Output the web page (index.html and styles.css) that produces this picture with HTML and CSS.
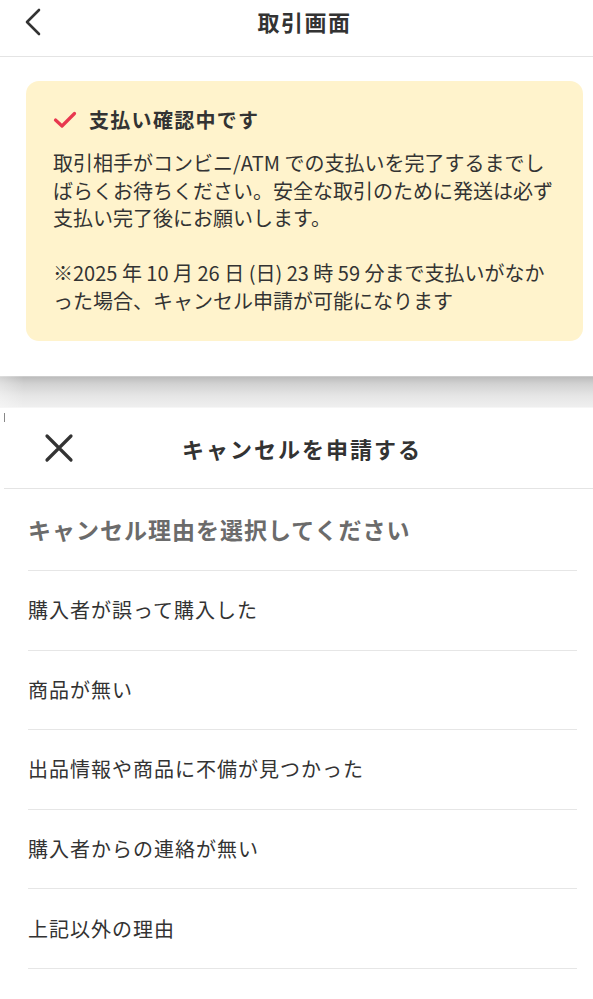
FILE: index.html
```html
<!DOCTYPE html>
<html lang="ja">
<head>
<meta charset="utf-8">
<title>取引画面</title>
<link rel="stylesheet" href="styles.css">
</head>
<body>
<header class="topbar">
  <button class="icon-btn back" aria-label="戻る">
    <svg width="18" height="28" viewBox="0 0 18 28"><path d="M15 2 L3 14 L15 26" fill="none" stroke="#333" stroke-width="2.6" stroke-linecap="round" stroke-linejoin="round"/></svg>
  </button>
  <h1 class="topbar-title">取引画面</h1>
  <span class="spacer"></span>
</header>

<main class="trade">
  <section class="status-card">
    <div class="status-head">
      <svg class="check" width="24" height="18" viewBox="0 0 24 18"><path d="M2.5 9 L9 15 L21.5 2.5" fill="none" stroke="#e8384f" stroke-width="3.2" stroke-linecap="round" stroke-linejoin="round"/></svg>
      <h2 class="status-title">支払い確認中です</h2>
    </div>
    <p class="status-text">取引相手がコンビニ/ATM での支払いを完了するまでしばらくお待ちください。安全な取引のために発送は必ず支払い完了後にお願いします。</p>
    <p class="status-text note">※2025 年 10 月 26 日 (日) 23 時 59 分まで支払いがなかった場合、キャンセル申請が可能になります</p>
  </section>
</main>

<div class="backdrop-edge"></div>

<section class="sheet">
  <span class="sheet-grip"></span>
  <div class="sheet-head">
    <button class="icon-btn close" aria-label="閉じる">
      <svg width="30" height="30" viewBox="0 0 30 30"><path d="M3 3 L27 27 M27 3 L3 27" fill="none" stroke="#333" stroke-width="3.2" stroke-linecap="round"/></svg>
    </button>
    <h2 class="sheet-title">キャンセルを申請する</h2>
    <span class="spacer"></span>
  </div>
  <ul class="reason-list">
    <li class="reason prompt">キャンセル理由を選択してください</li>
    <li class="reason">購入者が誤って購入した</li>
    <li class="reason">商品が無い</li>
    <li class="reason">出品情報や商品に不備が見つかった</li>
    <li class="reason">購入者からの連絡が無い</li>
    <li class="reason">上記以外の理由</li>
  </ul>
</section>
</body>
</html>
```

FILE: styles.css
```css
* { box-sizing: border-box; }

html, body {
  margin: 0;
  padding: 0;
  background: #ffffff;
}

body {
  font-family: "Noto Sans CJK JP", "Noto Sans", sans-serif;
  color: #333333;
  width: 593px;
}

h1, h2, p, ul { margin: 0; padding: 0; }

.icon-btn {
  border: 0;
  background: none;
  padding: 0;
  display: flex;
  align-items: center;
  justify-content: flex-start;
}

/* top bar */
.topbar {
  height: 57px;
  display: grid;
  grid-template-columns: 64px 1fr 48px;
  align-items: center;
  border-bottom: 1px solid #e4e4e4;
}

.topbar .back {
  padding-left: 24px;
  margin-top: -12px;
}

.topbar-title {
  font-size: 22px;
  font-weight: 700;
  letter-spacing: 1.5px;
  text-align: center;
  margin-top: -14px;
  color: #333;
}

/* status card */
.trade {
  padding: 24px 10px 35px 26px;
}

.status-card {
  background: #fff3cc;
  border-radius: 13px;
  padding: 24px 24px 27px 27px;
}

.status-head {
  display: flex;
  align-items: center;
  gap: 12px;
  margin-bottom: 14px;
}

.check { flex: none; }

.status-title {
  font-size: 20px;
  font-weight: 700;
  letter-spacing: 1.3px;
  line-height: 30px;
}

.status-text {
  font-size: 20px;
  line-height: 27.5px;
  color: #333;
}

.status-text.note {
  margin-top: 27.5px;
}

/* dimmed strip */
.backdrop-edge {
  height: 32px;
  background:
    linear-gradient(to right, rgba(255,255,255,0.35), rgba(255,255,255,0) 24px),
    linear-gradient(to bottom, #dcdcdc 0, #bcbcbc 1px, #d2d2d2 8px, #e6e6e6 20px, #efefef 100%);
  border-bottom: 1px solid #f6f6f6;
}

/* sheet */
.sheet {
  position: relative;
  background: #fff;
  margin-left: 4px;
}

.sheet-grip {
  position: absolute;
  left: 0;
  top: 5px;
  width: 1px;
  height: 9px;
  background: #888;
}

.sheet-head {
  height: 81px;
  display: grid;
  grid-template-columns: 96px 1fr 89px;
  align-items: center;
  border-bottom: 1px solid #e4e4e4;
}

.sheet-head .close {
  padding-left: 40px;
}

.sheet-title {
  font-size: 22px;
  font-weight: 700;
  letter-spacing: 2px;
  text-align: center;
  color: #333;
}

.reason-list {
  list-style: none;
  margin: 0 16px 0 24px;
}

.reason {
  height: 79.6px;
  display: flex;
  align-items: center;
  font-size: 20px;
  letter-spacing: 1px;
  color: #333;
  border-bottom: 1px solid #e6e6e6;
  padding-bottom: 1px;
}

.reason.prompt {
  height: 82px;
  font-size: 23px;
  font-weight: 700;
  letter-spacing: 1px;
  color: #6b6b6b;
}
```
